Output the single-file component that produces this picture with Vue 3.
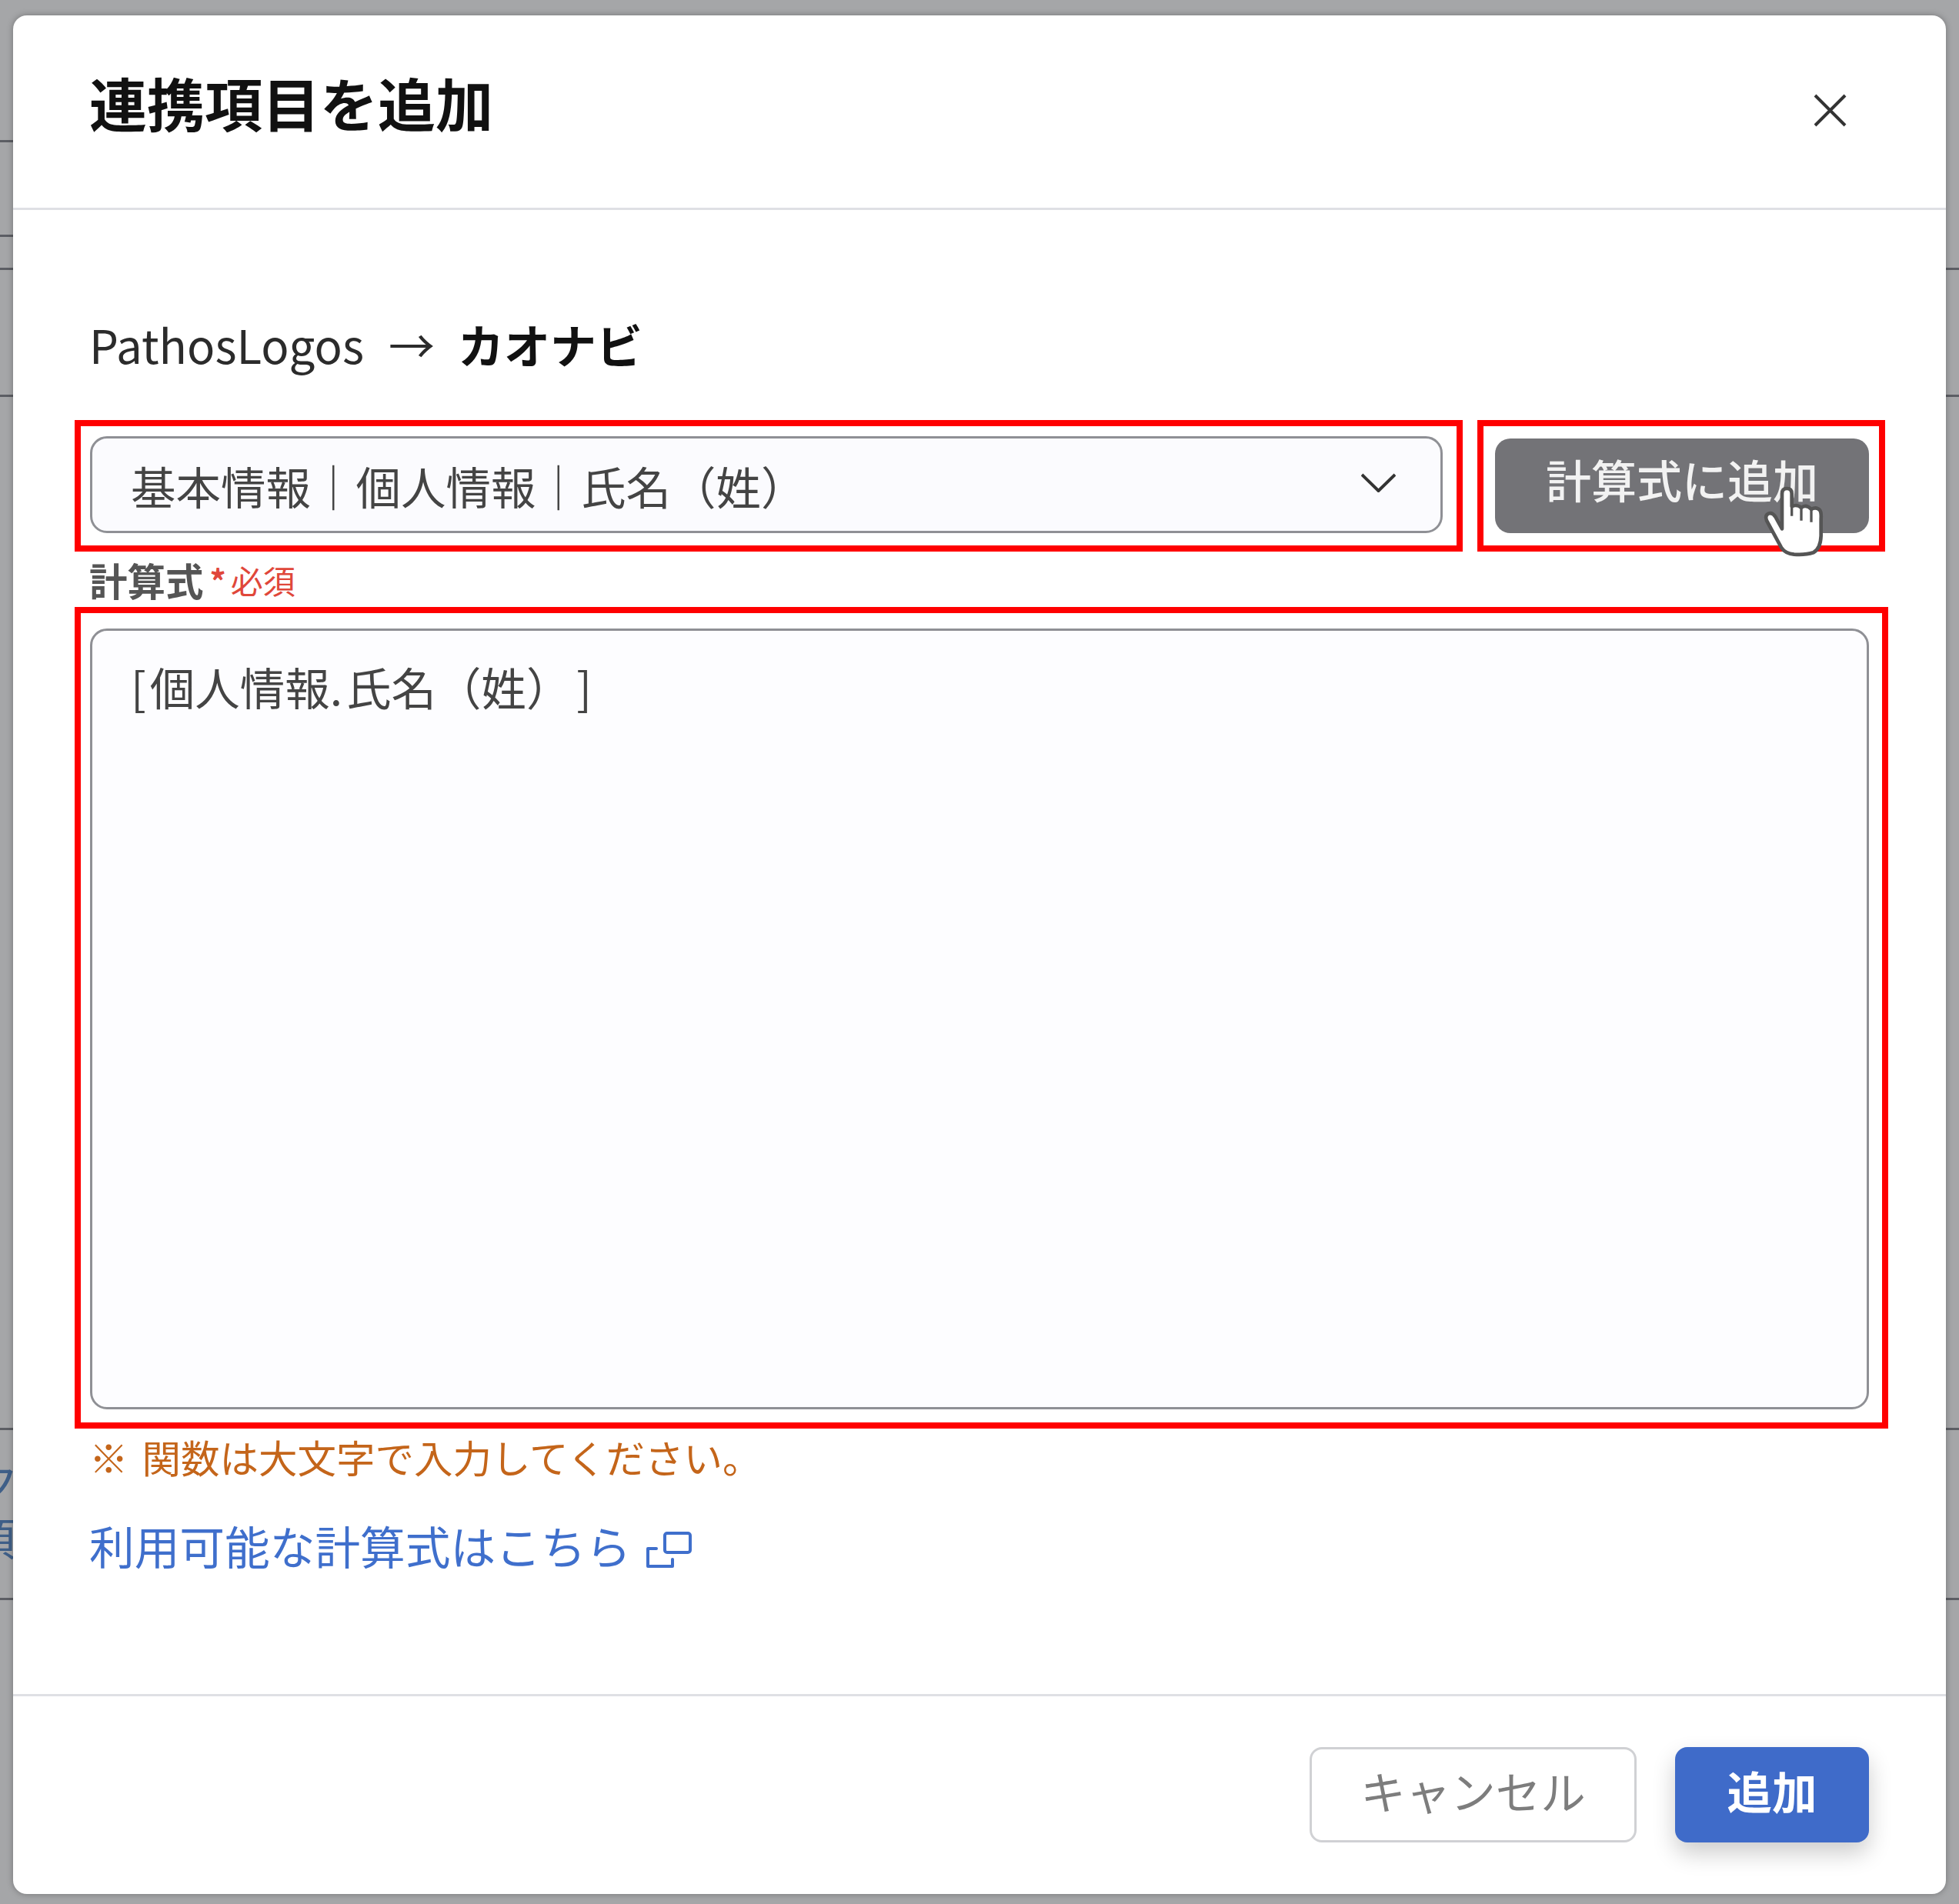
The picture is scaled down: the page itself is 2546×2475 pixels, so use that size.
<script setup>
const backdropLines = [
  { side: 'left', top: 182 }, { side: 'left', top: 305 }, { side: 'left', top: 348 }, { side: 'left', top: 513 },
  { side: 'left', top: 1856 }, { side: 'left', top: 2077 },
  { side: 'right', top: 348 }, { side: 'right', top: 513 }, { side: 'right', top: 1856 }, { side: 'right', top: 2077 },
]
</script>

<template>
  <div class="backdrop">
    <i v-for="l in backdropLines" :key="l.side + l.top" class="line" :class="l.side" :style="{ top: l.top + 'px' }"></i>
    <span class="peek peek-a">ク</span>
    <span class="peek peek-b">項</span>

    <section class="dialog">
      <header class="head">
        <h1 class="title">連携項目を追加</h1>
        <svg class="close" viewBox="0 0 43 43" width="43" height="43">
          <path d="M2 2 41 41M41 2 2 41" fill="none" stroke="#333" stroke-width="4" />
        </svg>
      </header>

      <div class="body">
        <div class="route">
          <span>PathosLogos</span>
          <span class="arrow">→</span>
          <strong>カオナビ</strong>
        </div>

        <div class="picker-row">
          <div class="mark mark-select">
            <div class="select">
              <span>基本情報｜個人情報｜氏名（姓）</span>
              <svg viewBox="0 0 45 25" width="45" height="25">
                <path d="M1 2 22.500 23 44 2" fill="none" stroke="#333" stroke-width="4" />
              </svg>
            </div>
          </div>
          <div class="mark mark-btn">
            <button class="btn-formula">
              計算式に追加
              <svg class="hand" viewBox="0 0 420 420" width="140" height="140">
                <path d="M168 262V125Q168 105 187 105 206 105 206 125V175Q226 165 243 180 262 165 282 186 302 175 316 190 322 200 320 225V290Q318 340 290 355 260 365 215 362 180 358 165 335L108 230Q100 210 115 203 130 197 142 215Z" fill="#fff" stroke="#555" stroke-width="14" stroke-linejoin="round" />
                <path d="M206 175V212M243 180V230M282 186V236" fill="none" stroke="#555" stroke-width="10" />
              </svg>
            </button>
          </div>
        </div>

        <div class="label">計算式<span class="star">*</span><span class="req">必須</span></div>

        <div class="mark mark-area">
          <div class="area"><span class="open">[</span>個人情報<span class="dot">.</span>氏名（姓）<span class="shut">]</span></div>
        </div>

        <p class="note"><span class="kome">※</span>関数は大文字で入力してください。</p>
        <a class="link">
          利用可能な計算式はこちら
          <svg viewBox="0 0 60 50" width="60" height="50">
            <rect x="25" y="3" width="33" height="25" rx="3" fill="none" stroke="#3f6fcc" stroke-width="4" />
            <path d="M14 23H3V46H35V37" fill="none" stroke="#3f6fcc" stroke-width="4" stroke-linejoin="round" stroke-linecap="round" />
          </svg>
        </a>
      </div>

      <footer class="foot">
        <button class="btn-cancel">キャンセル</button>
        <button class="btn-add">追加</button>
      </footer>
    </section>
  </div>
</template>

<style scoped>
.backdrop {
  position: relative;
  width: 2546px;
  height: 2475px;
  box-sizing: border-box;
  padding: 20px 17px 13px;
  overflow: hidden;
  background: #a5a6a8;
  font-family: "Noto Sans CJK JP", "Noto Sans", sans-serif;
  color: #333;
}
.line {
  position: absolute;
  width: 20px;
  height: 3px;
  background: #5c5e64;
}
.line.left { left: 0; }
.line.right { right: 0; }
.peek {
  position: absolute;
  font-size: 58px;
  line-height: 1;
  color: #3f5f88;
}
.peek-a { left: -34px; top: 1895px; }
.peek-b { left: -38px; top: 1968px; }

.dialog {
  position: relative;
  height: 100%;
  display: flex;
  flex-direction: column;
  background: #fff;
  border-radius: 18px;
  box-shadow: 0 0 8px rgba(0, 0, 0, 0.3);
}

.head {
  height: 253px;
  flex: none;
  box-sizing: border-box;
  display: flex;
  justify-content: space-between;
  padding: 102px 129px 0 99px;
  border-bottom: 3px solid #dfe0e4;
}
.title {
  margin: 0;
  margin-top: -39px;
  font-size: 75px;
  line-height: 100px;
  font-weight: 700;
  color: #111;
}
.close { flex: none; }

.body {
  flex: 1;
  min-height: 0;
  padding: 0 75px 0 80px;
}
.route {
  height: 273px;
  box-sizing: border-box;
  padding: 129px 0 0 19px;
  display: flex;
  gap: 30px;
  font-size: 60px;
  line-height: 90px;
  color: #2b2b2b;
}
.route strong { font-weight: 700; color: #111; }
.arrow { margin-left: 2px; }

.picker-row {
  display: flex;
  gap: 19px;
  padding-right: 4px;
}
.mark {
  box-sizing: border-box;
  border: 8px solid #f00;
}
.mark-select {
  flex: 1;
  height: 171px;
  padding: 13px 18px 16px 12px;
}
.select {
  box-sizing: border-box;
  height: 100%;
  padding: 0 58px 0 50px;
  display: flex;
  align-items: center;
  justify-content: space-between;
  background: #fbfbfe;
  border: 3px solid #8f9095;
  border-radius: 22px;
  font-size: 58.500px;
  color: #444;
}
.select svg { margin-top: -6px; }
.mark-btn {
  flex: none;
  width: 530px;
  height: 171px;
  padding: 16px 13px 16px 15px;
}
.btn-formula {
  position: relative;
  display: block;
  width: 100%;
  height: 100%;
  padding: 0 0 18px;
  border: 0;
  border-radius: 20px;
  background: #737377;
  color: #f2f2f2;
  font: inherit;
  font-size: 59px;
  font-weight: 500;
}
.hand {
  position: absolute;
  left: 317px;
  top: 30px;
}

.label {
  height: 72px;
  padding-left: 19px;
  display: flex;
  align-items: center;
  font-size: 49.500px;
  font-weight: 700;
  color: #555;
}
.star { margin-left: 8px; color: #e0473a; font-size: 42px; }
.req {
  margin-left: 6px;
  color: #e0473a;
  font-size: 42px;
  font-weight: 400;
}

.mark-area {
  height: 1068px;
  padding: 20px 17px 17px 12px;
}
.area {
  box-sizing: border-box;
  height: 100%;
  padding: 32px 50px;
  background: #fdfdff;
  border: 3px solid #8f9095;
  border-radius: 22px;
  font-size: 58.500px;
  line-height: 80px;
  color: #444;
}
.open { margin-right: 5px; }
.dot { margin-right: 5px; }
.shut { margin-left: 36px; }

.note {
  margin: 0;
  padding: 3px 0 0 19px;
  font-size: 50.500px;
  line-height: 66px;
  color: #c4651a;
}
.kome { margin-right: 18px; }
.link {
  margin-top: 41px;
  margin-left: 19px;
  display: inline-flex;
  align-items: center;
  gap: 19px;
  font-size: 58.700px;
  line-height: 84px;
  color: #3f6fcc;
}
.link svg { margin-top: 12px; }

.foot {
  flex: none;
  height: 260px;
  box-sizing: border-box;
  border-top: 3px solid #dfe0e4;
  padding: 66px 100px 0 0;
  display: flex;
  justify-content: flex-end;
  align-items: flex-start;
  gap: 50px;
}
.btn-cancel,
.btn-add {
  height: 124px;
  box-sizing: border-box;
  padding: 0 0 14px;
  border-radius: 16px;
  font: inherit;
  font-size: 58.500px;
}
.btn-cancel {
  width: 425px;
  background: #fff;
  border: 3px solid #d0d1d4;
  color: #7d7d7d;
}
.btn-add {
  width: 252px;
  background: #3f6bc9;
  border: 0;
  color: #fff;
  font-weight: 700;
  box-shadow: 0 14px 30px rgba(0, 0, 0, 0.2);
}
</style>
